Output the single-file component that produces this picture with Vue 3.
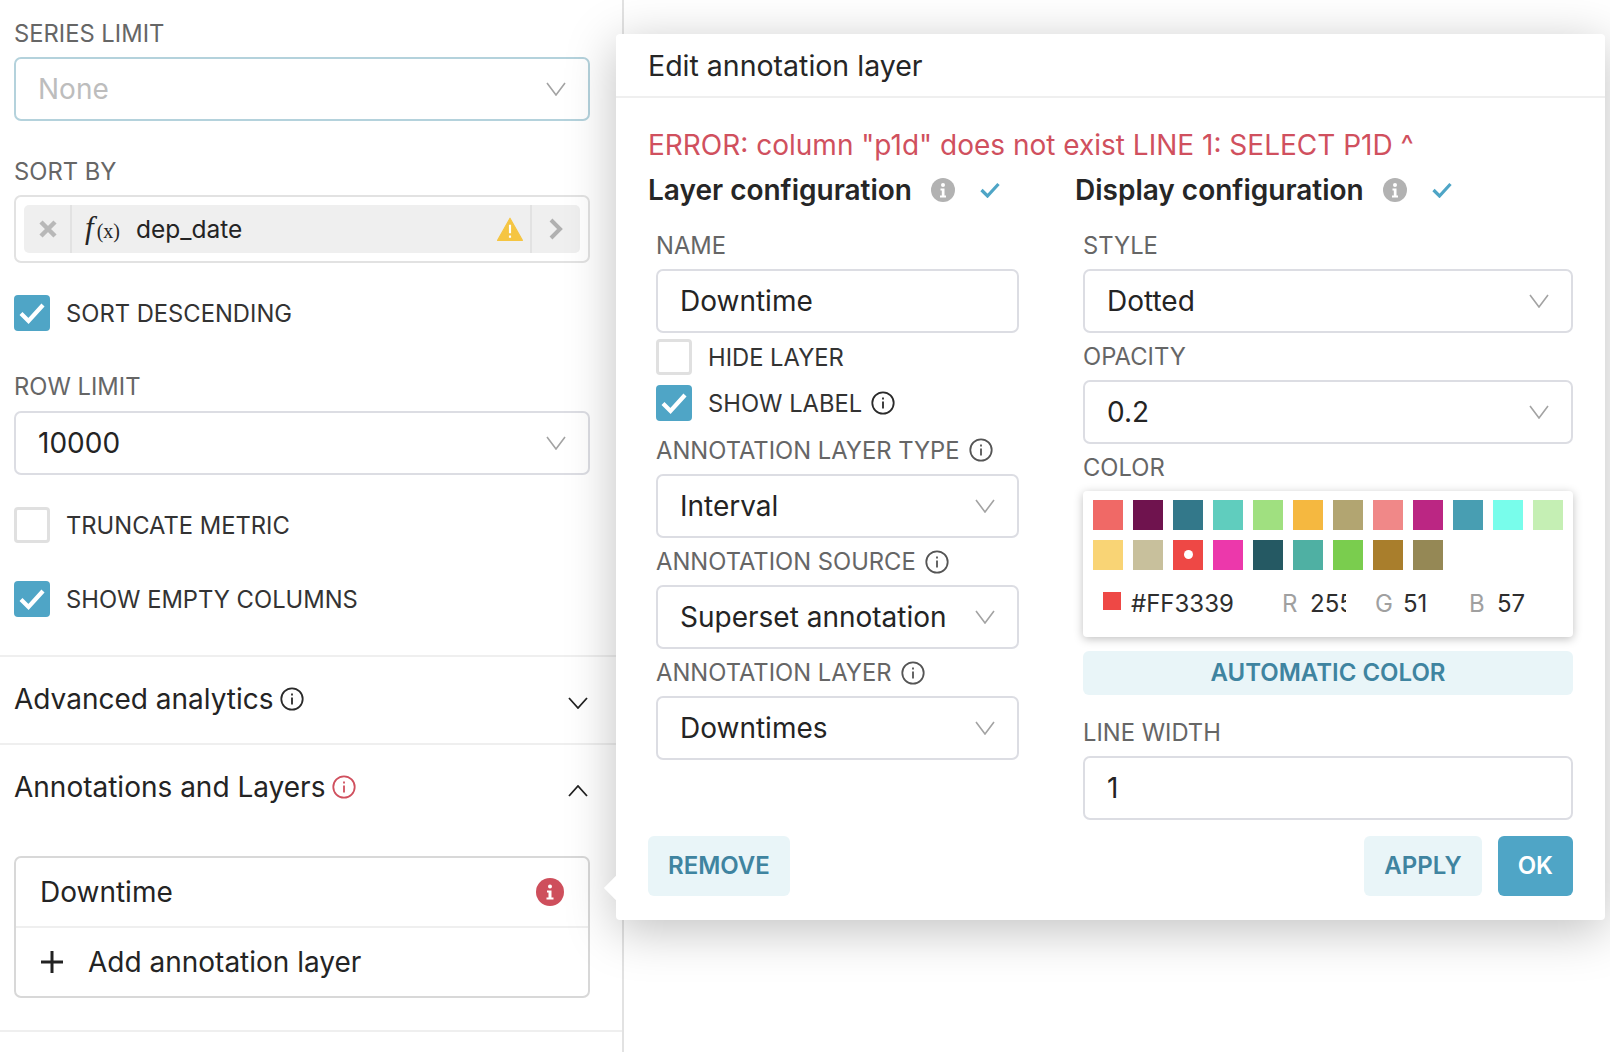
<template>
  <div class="page">
    <!-- LEFT CONTROL PANEL -->
    <aside class="panel">
      <div class="controls">
        <div class="label">SERIES LIMIT</div>
        <div class="select focused">
          <span class="placeholder">None</span>
          <ChevronDown class="chev" />
        </div>

        <div class="label sort-label">SORT BY</div>
        <div class="sort-box">
          <div class="chip">
            <span class="chip-x">
              <svg width="18" height="18" viewBox="0 0 18 18"><path d="M2 2l14 14M16 2L2 16" stroke="#b8b8b8" stroke-width="4.500" /></svg>
            </span>
            <span class="chip-body">
              <span class="fx"><i>f</i><span class="fx-x">(x)</span></span>
              <span class="chip-name">dep_date</span>
            </span>
            <svg class="warn" width="26" height="24" viewBox="0 0 24 22">
              <path d="M12 1L23.500 21.500H.5z" fill="#f5c542" stroke="#f5c542" stroke-width="1" stroke-linejoin="round" />
              <path d="M12 7v8M12 17v2" stroke="#fff" stroke-width="2" />
            </svg>
            <span class="chip-more">
              <svg width="16" height="22" viewBox="0 0 16 22"><path d="M3 2l9 9-9 9" fill="none" stroke="#b0b0b0" stroke-width="4" /></svg>
            </span>
          </div>
        </div>

        <div class="check sort-desc">
          <span class="box on"><Tick /></span>
          <span class="check-text">SORT DESCENDING</span>
        </div>

        <div class="label row-label">ROW LIMIT</div>
        <div class="select">
          <span>10000</span>
          <ChevronDown class="chev" />
        </div>

        <div class="check truncate">
          <span class="box"></span>
          <span class="check-text">TRUNCATE METRIC</span>
        </div>
        <div class="check empty-cols">
          <span class="box on"><Tick /></span>
          <span class="check-text">SHOW EMPTY COLUMNS</span>
        </div>
      </div>

      <div class="section">
        <span class="section-title">Advanced analytics</span>
        <InfoIcon class="info-dark" />
        <svg class="section-chev" width="20" height="12" viewBox="0 0 20 12"><path d="M1 1l9 10 9-10" fill="none" stroke="#222" stroke-width="1.800" /></svg>
      </div>

      <div class="section open">
        <span class="section-title">Annotations and Layers</span>
        <InfoIcon class="info-red" />
        <svg class="section-chev" width="20" height="12" viewBox="0 0 20 12"><path d="M1 11l9-10 9 10" fill="none" stroke="#222" stroke-width="1.800" /></svg>
      </div>

      <div class="layers-wrap">
        <div class="layers">
          <div class="layer-row">
            <span>Downtime</span>
            <svg class="layer-err" width="28" height="28" viewBox="0 0 28 28">
              <circle cx="14" cy="14" r="14" fill="#ce4f5c" />
              <circle cx="14" cy="8.500" r="2" fill="#fff" />
              <path d="M11 12.500h4.500v7H17.500v2h-7v-2h2v-5h-1.500z" fill="#fff" />
            </svg>
          </div>
          <div class="layer-row add">
            <svg width="24" height="24" viewBox="0 0 24 24"><path d="M12 1v22M1 12h22" stroke="#222" stroke-width="3" /></svg>
            <span>Add annotation layer</span>
          </div>
        </div>
      </div>
    </aside>

    <!-- POPOVER -->
    <section class="popover">
      <span class="arrow"></span>
      <header class="pop-head">Edit annotation layer</header>
      <div class="pop-body">
        <div class="error">ERROR: column "p1d" does not exist LINE 1: SELECT P1D ^</div>
        <div class="cols">
          <div class="col left">
            <div class="col-head">
              <span>Layer configuration</span>
              <SolidInfo class="solid-info" />
              <HeadCheck class="head-check" />
            </div>
            <div class="fields">
              <div class="label">NAME</div>
              <div class="select input">Downtime</div>

              <div class="check hide-layer">
                <span class="box"></span>
                <span>HIDE LAYER</span>
              </div>
              <div class="check show-label">
                <span class="box on"><Tick /></span>
                <span>SHOW LABEL</span>
                <InfoIcon class="info-dark" />
              </div>

              <template v-for="(f, i) in layerFields" :key="f.label">
                <div class="label" :class="i === 0 ? 'after-check' : 'after-select'">
                  {{ f.label }}<InfoIcon class="info-gray" />
                </div>
                <div class="select">
                  <span>{{ f.value }}</span>
                  <ChevronDown class="chev" />
                </div>
              </template>
            </div>
          </div>

          <div class="col right">
            <div class="col-head">
              <span>Display configuration</span>
              <SolidInfo class="solid-info" />
              <HeadCheck class="head-check" />
            </div>
            <div class="fields">
              <div class="label">STYLE</div>
              <div class="select">
                <span>Dotted</span>
                <ChevronDown class="chev" />
              </div>
              <div class="label after-select">OPACITY</div>
              <div class="select">
                <span>0.2</span>
                <ChevronDown class="chev" />
              </div>
              <div class="label after-select">COLOR</div>
              <div class="picker">
                <div class="swatches">
                  <span
                    v-for="c in swatches"
                    :key="c"
                    class="swatch"
                    :style="{ background: c }"
                  ><i v-if="c === activeColor" class="dot"></i></span>
                </div>
                <div class="rgb">
                  <span class="hex-box" :style="{ background: activeColor }"></span>
                  <span class="hex">#FF3339</span>
                  <span class="rgb-k">R</span><span class="rgb-v v-r">255</span>
                  <span class="rgb-k">G</span><span class="rgb-v v-g">51</span>
                  <span class="rgb-k">B</span><span class="rgb-v">57</span>
                </div>
              </div>
              <div class="auto-color">AUTOMATIC COLOR</div>
              <div class="label line-width">LINE WIDTH</div>
              <div class="select input">1</div>
            </div>
          </div>
        </div>

        <footer class="pop-foot">
          <button class="btn light">REMOVE</button>
          <span class="foot-right">
            <button class="btn light">APPLY</button>
            <button class="btn primary">OK</button>
          </span>
        </footer>
      </div>
    </section>
  </div>
</template>

<script setup>
import { h } from 'vue'

const ChevronDown = () =>
  h('svg', { width: 20, height: 14, viewBox: '0 0 20 14' }, [
    h('path', { d: 'M1 1l9 12 9-12', fill: 'none', stroke: '#a3a3a3', 'stroke-width': 1.6 })
  ])

const Tick = () =>
  h('svg', { width: 28, height: 24, viewBox: '0 0 28 24' }, [
    h('path', { d: 'M3 12.500l7.500 7.500L25 4', fill: 'none', stroke: '#fff', 'stroke-width': 4.2 })
  ])

const InfoIcon = () =>
  h('svg', { width: 24, height: 24, viewBox: '0 0 24 24' }, [
    h('circle', { cx: 12, cy: 12, r: 10.7, fill: 'none', stroke: 'currentColor', 'stroke-width': 1.8 }),
    h('path', { d: 'M12 10.500v7M12 6.500v2', stroke: 'currentColor', 'stroke-width': 1.8 })
  ])

const SolidInfo = () =>
  h('svg', { width: 24, height: 24, viewBox: '0 0 24 24' }, [
    h('circle', { cx: 12, cy: 12, r: 12, fill: '#b2b2b2' }),
    h('circle', { cx: 12, cy: 7, r: 2, fill: '#fff' }),
    h('path', { d: 'M9.500 10.500h4v7h1.500v2H9v-2h1.800v-5H9.500z', fill: '#fff' })
  ])

const HeadCheck = () =>
  h('svg', { width: 20, height: 16, viewBox: '0 0 20 16' }, [
    h('path', { d: 'M1.500 8l6 6L18.500 2', fill: 'none', stroke: '#4ea5c6', 'stroke-width': 3.2 })
  ])

const layerFields = [
  { label: 'ANNOTATION LAYER TYPE', value: 'Interval' },
  { label: 'ANNOTATION SOURCE', value: 'Superset annotation' },
  { label: 'ANNOTATION LAYER', value: 'Downtimes' }
]

const activeColor = '#ee4845'
const swatches = [
  '#f06966', '#6f134e', '#33788a', '#60cdbe', '#a0e080', '#f5b840',
  '#b2a571', '#f08888', '#bb2683', '#489eb2', '#78fdeb', '#c5efb4',
  '#f9d475', '#c8c09c', '#ee4845', '#ec38ab', '#255963', '#4fb0a3',
  '#7acd4e', '#a97e2c', '#958855'
]
</script>

<style>
html, body {
  margin: 0;
  background: #fff;
}
</style>

<style scoped>
.page {
  position: relative;
  width: 1610px;
  height: 1052px;
  overflow: hidden;
  font-family: Inter, "Noto Sans", sans-serif;
  color: #242424;
  background: #fff;
}

/* ========================
   LEFT PANEL
======================== */
.panel {
  width: 622px;
  height: 1052px;
  border-right: 2px solid #e2e2e2;
}

.controls {
  box-sizing: border-box;
  height: 657px;
  padding: 18px 32px 0 14px;
  border-bottom: 2px solid #efefef;
}

.label {
  display: flex;
  align-items: center;
  height: 30px;
  margin-bottom: 8px;
  font-size: 23.750px;
  color: #666;
  white-space: nowrap;
}

.label svg {
  margin-left: 9px;
}

.controls > .label { margin-bottom: 9px; }
.fields > .label:first-child { margin-bottom: 9px; }

.sort-label { margin-top: 35px; }
.row-label { margin-top: 40px; }
.controls > .row-label { margin-bottom: 10px; }

.select {
  display: flex;
  align-items: center;
  justify-content: space-between;
  box-sizing: border-box;
  height: 64px;
  padding: 0 22px;
  border: 2px solid #dcdde3;
  border-radius: 7px;
  font-size: 28px;
  color: #242424;
  background: #fff;
}

.select.focused { border-color: #b4d2dc; }
.placeholder { color: #bdbdbd; }
.chev { flex: none; }

.sort-box {
  box-sizing: border-box;
  height: 68px;
  padding: 8px;
  border: 2px solid #e2e2e2;
  border-radius: 7px;
}

.chip {
  display: flex;
  align-items: center;
  height: 48px;
  border-radius: 5px;
  background: #efefef;
}

.chip-x {
  display: flex;
  align-items: center;
  justify-content: center;
  box-sizing: content-box;
  width: 45px;
  height: 100%;
  padding-left: 1px;
  border-right: 2px solid #e2e2e2;
}

.chip-body {
  flex: 1;
  display: flex;
  align-items: center;
  padding-left: 13px;
}

.fx {
  width: 51px;
  font-family: "Liberation Serif", serif;
  font-size: 31px;
  line-height: 30px;
}

.fx i { margin-right: 3px; }
.fx-x { font-size: 20px; }

.chip-name { font-size: 24.500px; }

.warn { margin-right: 7px; }

.chip-more {
  display: flex;
  align-items: center;
  justify-content: center;
  width: 48px;
  height: 100%;
  border-left: 2px solid #e2e2e2;
}

.check {
  display: flex;
  align-items: center;
  height: 36px;
  font-size: 23.750px;
  color: #333;
  white-space: nowrap;
}

.check svg { display: block; }
.check .info-dark { margin-left: 9px; }

.box {
  flex: none;
  box-sizing: border-box;
  display: flex;
  align-items: center;
  justify-content: center;
  width: 36px;
  height: 36px;
  margin-right: 16px;
  border: 3px solid #e0e0e0;
  border-radius: 4px;
  background: #fff;
}

.box.on {
  border: none;
  background: #4fa5c6;
}

.check-text { padding-top: 1px; }

.sort-desc { margin-top: 32px; }
.truncate { margin-top: 32px; }
.empty-cols { margin-top: 38px; }

.section {
  display: flex;
  align-items: center;
  box-sizing: border-box;
  height: 88px;
  padding: 0 15px 2px 14px;
  border-bottom: 2px solid #efefef;
}

.section.open {
  padding-bottom: 4px;
  border-bottom: none;
}

.section-title {
  font-size: 28px;
  color: #242424;
  margin-right: 6.500px;
}

.section-chev {
  margin-left: auto;
  margin-right: 19px;
  margin-top: 7px;
}

.info-dark { color: #2a2a2a; }
.info-red { color: #d0505e; }
.info-gray { color: #555; }

.layers-wrap {
  padding: 23px 32px 32px 14px;
  border-bottom: 2px solid #efefef;
}

.layers {
  box-sizing: border-box;
  height: 142px;
  border: 2px solid #d8d8d8;
  border-radius: 7px;
}

.layer-row {
  display: flex;
  align-items: center;
  justify-content: space-between;
  box-sizing: border-box;
  height: 70px;
  padding: 0 24px;
  font-size: 28px;
  border-bottom: 2px solid #efefef;
}

.layer-row.add {
  justify-content: flex-start;
  gap: 24px;
  height: 68px;
  border-bottom: none;
}

/* ========================
   POPOVER
======================== */
.popover {
  position: absolute;
  left: 616px;
  top: 34px;
  width: 989px;
  border-radius: 4px;
  background: #fff;
  box-shadow: 0 10px 50px rgba(0, 0, 0, 0.25);
}

.arrow {
  position: absolute;
  left: -8px;
  top: 844px;
  width: 20px;
  height: 20px;
  background: #fff;
  transform: rotate(45deg);
}

.pop-head {
  box-sizing: border-box;
  height: 64px;
  padding: 14px 32px 0;
  font-size: 28.500px;
  line-height: 36px;
  color: #262626;
  border-bottom: 2px solid #efefef;
}

.pop-body {
  padding: 29px 32px 24px;
}

.error {
  height: 36px;
  font-size: 28px;
  line-height: 36px;
  color: #d0505e;
  white-space: nowrap;
}

.cols {
  display: grid;
  grid-template-columns: 427px 1fr;
  margin-top: 10px;
}

.col-head {
  display: flex;
  align-items: center;
  height: 34px;
  font-size: 28px;
  font-weight: 600;
  color: #262626;
  white-space: nowrap;
}

.solid-info { margin-left: 19px; }
.head-check { margin-left: 25px; }

.fields {
  padding: 23px 0 0 8px;
}

.left .fields { width: 363px; box-sizing: content-box; }

.hide-layer { margin-top: 6px; }
.show-label { margin-top: 10px; }
.fields > .after-check { margin-top: 14px; margin-bottom: 9px; }
.after-select { margin-top: 8.800px; }

.picker {
  box-sizing: border-box;
  height: 146px;
  padding: 9px 10px 10px;
  border-radius: 4px;
  background: #fff;
  box-shadow: 0 2px 10px rgba(0, 0, 0, 0.25);
}

.swatches {
  display: grid;
  grid-template-columns: repeat(12, 30px);
  gap: 10px;
}

.swatch {
  display: flex;
  align-items: center;
  justify-content: center;
  width: 30px;
  height: 30px;
}

.dot {
  width: 9px;
  height: 9px;
  border-radius: 50%;
  background: #fff;
}

.rgb {
  display: flex;
  align-items: center;
  height: 28px;
  margin-top: 20px;
  padding-left: 10px;
  font-size: 24px;
  color: #2e2e2e;
  white-space: nowrap;
}

.hex-box {
  width: 18px;
  height: 18px;
  margin-top: -6px;
  margin-right: 10px;
}

.hex { width: 151px; }
.rgb-k { color: #a0a0a0; width: 28px; }
.rgb-v { overflow: hidden; }
.v-r { width: 36px; margin-right: 29px; }
.v-g { width: 38px; margin-right: 28px; }

.auto-color {
  height: 44px;
  margin-top: 14px;
  border-radius: 6px;
  background: #e9f5f8;
  color: #3f84a0;
  font-size: 24px;
  font-weight: 600;
  line-height: 44px;
  text-align: center;
}

.line-width { margin-top: 23px; }

.pop-foot {
  display: flex;
  justify-content: space-between;
  margin-top: 16px;
}

.foot-right {
  display: flex;
  gap: 16px;
}

.btn {
  height: 60px;
  padding: 0 20px;
  border: none;
  border-radius: 6px;
  font-family: inherit;
  font-size: 24px;
  font-weight: 600;
  cursor: pointer;
}

.btn.light {
  background: #e9f5f8;
  color: #3f84a0;
}

.btn.primary {
  background: #4fa5c6;
  color: #fff;
}
</style>
